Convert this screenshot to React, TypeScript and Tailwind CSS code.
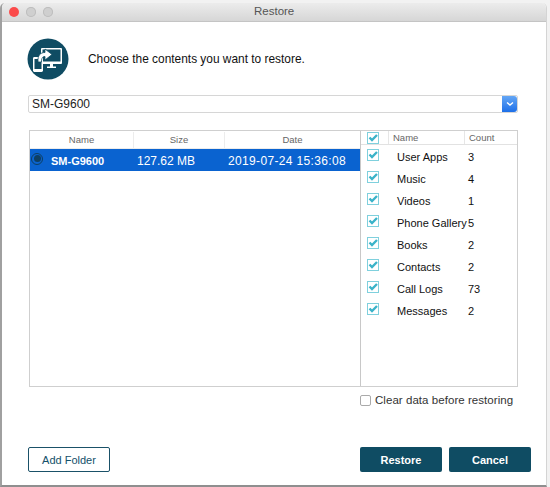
const leftCols = [
  { label: 'Name', width: 'w-[104px]' },
  { label: 'Size', width: 'w-[91px]' },
  { label: 'Date', width: 'flex-1' },
];

const contents = [
  { name: 'User Apps', count: '3' },
  { name: 'Music', count: '4' },
  { name: 'Videos', count: '1' },
  { name: 'Phone Gallery', count: '5' },
  { name: 'Books', count: '2' },
  { name: 'Contacts', count: '2' },
  { name: 'Call Logs', count: '73' },
  { name: 'Messages', count: '2' },
];

const CheckBox = () => (
  <svg width="12" height="12" viewBox="0 0 12 12" className="shrink-0">
    <rect x="0.5" y="0.5" width="11" height="11" fill="#fff" stroke="#7fd0dd" />
    <path d="M2.5 5.5 L5 8 L10 3" fill="none" stroke="#3bb3c9" strokeWidth="2.4" />
  </svg>
);

const RestoreIcon = () => (
  <svg width="42" height="42" viewBox="0 0 42 42" className="shrink-0">
    <circle cx="21" cy="21" r="20.5" fill="#0f4c63" />
    {/* monitor */}
    <rect x="14" y="10" width="21" height="16" rx="1" fill="#fff" />
    <rect x="15.5" y="11.5" width="18" height="12" fill="#0f4c63" />
    <path d="M23 26 h3 v2.5 h3 v1.5 h-9 v-1.5 h3z" fill="#fff" />
    {/* phone */}
    <rect x="6" y="19" width="10" height="15" rx="1.4" fill="#fff" />
    <rect x="7.5" y="21" width="7" height="10" fill="#0f4c63" />
    {/* arrow */}
    <path d="M11 24 C10.5 17 13.5 14.5 18 14.5 L18 11 L25 16.5 L18 22 L18 18.5 C15.5 18.5 14.5 20 14.5 24 Z" fill="#fff" stroke="#0f4c63" strokeWidth="0.8" />
  </svg>
);

export default function App() {
  return (
    <div className="h-[487px] w-[550px] overflow-hidden bg-[#f2f2f2] pr-[3px] pt-[3px] font-['Liberation_Sans',Arial,sans-serif]">
      <div className="flex h-[484px] flex-col overflow-hidden rounded-t-[5px] border-b-2 border-l-2 border-r border-b-[#8f8f8f] border-l-[#a0a0a0] border-r-[#d4d4d4] bg-white">
        {/* title bar */}
        <div className="flex h-[19px] shrink-0 items-center border-b border-[#c4c4c4] bg-gradient-to-b from-[#ececec] to-[#d6d6d6] pl-[7px]">
          <div className="flex gap-[7px]">
            <span className="h-[10px] w-[10px] rounded-full bg-[#fb4b4b]" />
            <span className="h-[10px] w-[10px] rounded-full bg-[#cfcfcf] shadow-[inset_0_0_0_1px_#bdbdbd]" />
            <span className="h-[10px] w-[10px] rounded-full bg-[#cfcfcf] shadow-[inset_0_0_0_1px_#bdbdbd]" />
          </div>
          <span className="ml-[201px] text-[11.5px] text-[#555]">Restore</span>
        </div>

        <div className="flex flex-1 flex-col pl-[26px] pr-[14px]">
          {/* heading */}
          <div className="-ml-[1px] mt-[16px] flex items-center gap-[19px]">
            <RestoreIcon />
            <p className="pt-[1px] text-[11.9px] text-[#111]">Choose the contents you want to restore.</p>
          </div>

          {/* device select */}
          <div className="mt-[15px] flex h-[18px] w-[490px] overflow-hidden rounded-[2px] border border-[#d6d6d6] bg-white">
            <span className="flex-1 pl-[3px] text-[12px] leading-[16px] text-[#222]">SM-G9600</span>
            <span className="flex w-[15px] items-center justify-center rounded-r-[3px] bg-gradient-to-b from-[#63a6f5] to-[#1c6fe8]">
              <svg width="8" height="6" viewBox="0 0 8 6">
                <path d="M1 1.5 L4 4 L7 1.5" fill="none" stroke="#fff" strokeWidth="1.4" />
              </svg>
            </span>
          </div>

          {/* tables */}
          <div className="ml-[1px] mt-[17px] flex h-[257px] w-[489px] border border-[#cfcfcf]">
            <div className="w-[331px] border-r border-[#c8c8c8]">
              <div className="flex h-[18px] items-center border-b border-[#ececec]">
                {leftCols.map((col) => (
                  <span
                    key={col.label}
                    className={`${col.width} border-r border-[#ececec] text-center text-[9.5px] leading-[16px] text-[#666] last:border-r-0`}
                  >
                    {col.label}
                  </span>
                ))}
              </div>
              <div className="flex h-[22px] items-center bg-[#0a63d0] pt-[2px] text-[12px] text-white">
                <span className="flex w-[104px] items-center">
                  <span className="-mt-[5px] ml-[1px] flex h-[12px] w-[12px] items-center justify-center rounded-full border border-[#0d3f63]">
                    <span className="h-[7px] w-[7px] rounded-full bg-[#0d3f63]" />
                  </span>
                  <span className="ml-[8px] text-[11px] font-bold">SM-G9600</span>
                </span>
                <span className="w-[91px] pl-[3px]">127.62 MB</span>
                <span className="flex-1 pl-[3px] tracking-[0.35px]">2019-07-24 15:36:08</span>
              </div>
            </div>

            <div className="flex-1">
              <div className="flex h-[14px] items-center border-b border-[#e2e2e2] text-[9.5px] text-[#666]">
                <span className="ml-[6px] flex w-[21px]">
                  <CheckBox />
                </span>
                <span className="w-[76px] border-l border-[#e6e6e6] pl-[4px] leading-[13px]">Name</span>
                <span className="border-l border-[#e6e6e6] pl-[4px] leading-[13px]">Count</span>
              </div>
              <div className="pt-[1px]">
                {contents.map((item) => (
                  <div key={item.name} className="flex h-[22px] items-center text-[11px] text-[#111]">
                    <span className="-mt-[4px] ml-[6px] flex w-[30px]">
                      <CheckBox />
                    </span>
                    <span className="w-[71px] whitespace-nowrap">{item.name}</span>
                    <span>{item.count}</span>
                  </div>
                ))}
              </div>
            </div>
          </div>

          {/* clear option */}
          <label className="ml-[332px] mt-[5px] flex items-center gap-[4px] text-[11.5px] tracking-[0.05px] text-[#333]">
            <span className="h-[11px] w-[11px] rounded-[2px] border border-[#aaa] bg-white" />
            Clear data before restoring
          </label>

          {/* footer buttons */}
          <div className="mt-[38px] flex items-center">
            <button className="h-[25px] w-[82px] rounded-[2px] border border-[#1a5168] bg-white text-[11px] text-[#14506a]">
              Add Folder
            </button>
            <button className="ml-[250px] h-[25px] w-[82px] rounded-[2px] bg-[#0f4c63] text-[11px] font-bold text-white">
              Restore
            </button>
            <button className="ml-[7px] h-[25px] w-[82px] rounded-[2px] bg-[#0f4c63] text-[11px] font-bold text-white">
              Cancel
            </button>
          </div>
        </div>
      </div>
    </div>
  );
}
